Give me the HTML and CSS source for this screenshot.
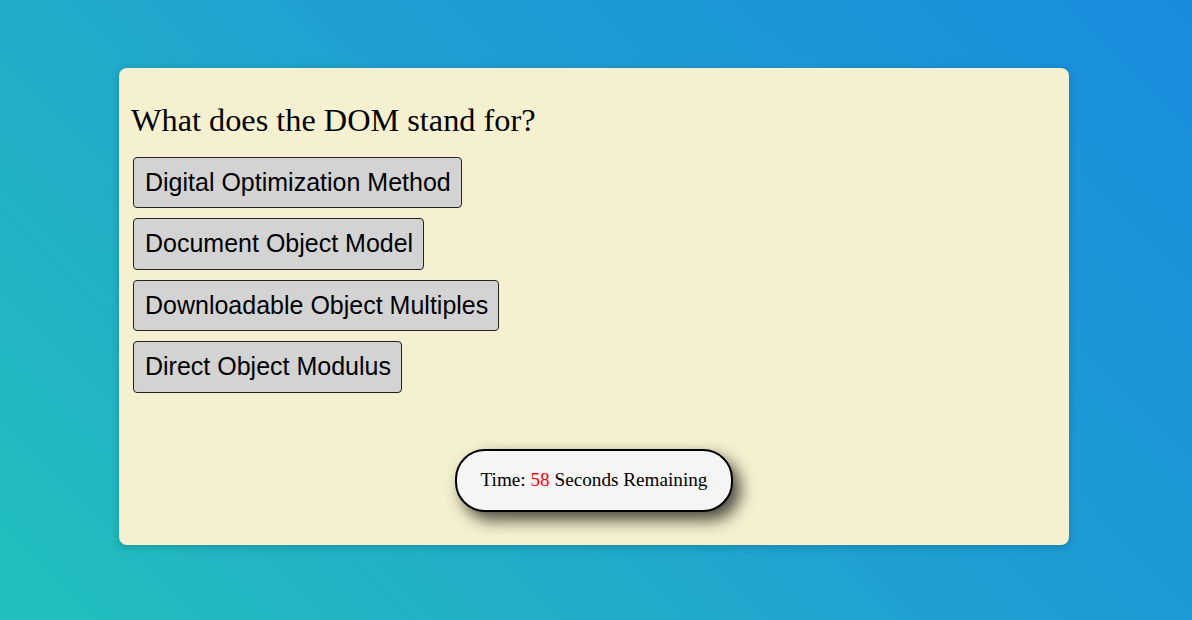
FILE: index.html
```html
<!DOCTYPE html>
<html>
<head>
<meta charset="utf-8">
<link rel="stylesheet" href="styles.css">
</head>
<body>
<main class="card">
  <h2 class="question">What does the DOM stand for?</h2>
  <div class="choices">
    <button class="choice">Digital Optimization Method</button>
    <button class="choice">Document Object Model</button>
    <button class="choice">Downloadable Object Multiples</button>
    <button class="choice">Direct Object Modulus</button>
  </div>
  <div class="timer-row">
    <div class="timer">Time: <span class="secs">58</span> Seconds Remaining</div>
  </div>
</main>
</body>
</html>
```
FILE: styles.css
```css
html, body {
  margin: 0;
  height: 100%;
}
body {
  background: linear-gradient(45deg, #22c0bb 0%, #1e9fd2 55%, #1a8cde 100%);
  font-family: "Liberation Serif", serif;
  padding: 68px 123px 0 119px;
  box-sizing: border-box;
}
.card {
  width: 950px;
  height: 477px;
  box-sizing: border-box;
  background: #f5f0cf;
  border-radius: 8px;
  box-shadow: 0 2px 8px rgba(0,0,0,0.2);
  padding: 33px 12px 0 12px;
  display: flex;
  flex-direction: column;
}
.question {
  margin: 0 0 18px 0;
  font-weight: normal;
  font-size: 32.3px;
  line-height: 38px;
  color: #000;
}
.choices {
  display: flex;
  flex-direction: column;
  align-items: flex-start;
  gap: 10px;
  padding-left: 2px;
}
.choice {
  font-family: "Liberation Sans", Arial, sans-serif;
  font-size: 25px;
  line-height: 29.4px;
  padding: 10px 10px 10px 11px;
  background: #d3d3d3;
  border: 1px solid #222;
  border-radius: 4px;
  color: #000;
}
.timer-row {
  display: flex;
  justify-content: center;
  margin-top: 56px;
}
.timer {
  width: 278px;
  height: 63px;
  box-sizing: border-box;
  border: 2px solid #000;
  border-radius: 30px;
  background: #f5f5f5;
  box-shadow: 7px 8px 16px rgba(0,0,0,0.7);
  display: flex;
  align-items: center;
  justify-content: center;
  font-size: 19.2px;
  color: #000;
  white-space: pre;
}
.secs {
  color: #ff0000;
}
```
